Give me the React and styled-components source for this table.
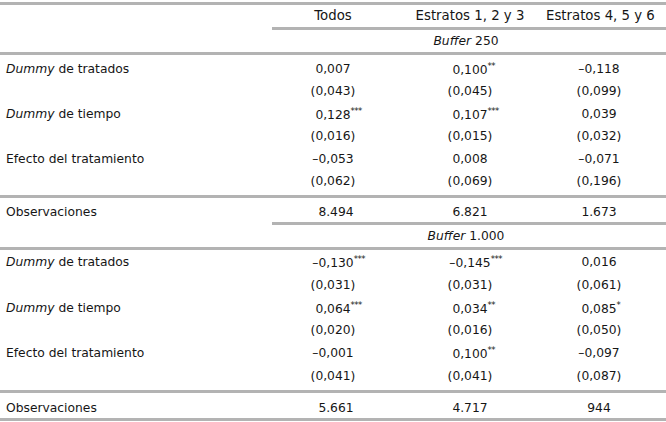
import React from 'react';
import styled, { createGlobalStyle } from 'styled-components';

const GlobalStyle = createGlobalStyle`
  html, body {
    margin: 0;
    padding: 0;
    background: #ffffff;
  }
  body {
    font-family: "DejaVu Sans", "Liberation Sans", sans-serif;
    font-size: 12.3px;
    color: #161616;
  }
`;

const secciones = [
  {
    titulo: '250',
    filas: [
      { label: 'tratados', dummy: true, valores: [['0,007'], ['0,100', '**'], ['–0,118']] },
      { valores: [['(0,043)'], ['(0,045)'], ['(0,099)']] },
      { label: 'tiempo', dummy: true, valores: [['0,128', '***'], ['0,107', '***'], ['0,039']] },
      { valores: [['(0,016)'], ['(0,015)'], ['(0,032)']] },
      { label: 'Efecto del tratamiento', valores: [['–0,053'], ['0,008'], ['–0,071']] },
      { valores: [['(0,062)'], ['(0,069)'], ['(0,196)']] }
    ],
    obs: ['8.494', '6.821', '1.673'],
    alto: 22.4,
    arriba: 3,
    abajo: 3,
    obsAlto: 24,
    obsPad: 3
  },
  {
    titulo: '1.000',
    filas: [
      { label: 'tratados', dummy: true, valores: [['–0,130', '***'], ['–0,145', '***'], ['0,016']] },
      { valores: [['(0,031)'], ['(0,031)'], ['(0,061)']] },
      { label: 'tiempo', dummy: true, valores: [['0,064', '***'], ['0,034', '**'], ['0,085', '*']] },
      { valores: [['(0,020)'], ['(0,016)'], ['(0,050)']] },
      { label: 'Efecto del tratamiento', valores: [['–0,001'], ['0,100', '**'], ['–0,097']] },
      { valores: [['(0,041)'], ['(0,041)'], ['(0,087)']] }
    ],
    obs: ['5.661', '4.717', '944'],
    alto: 22.8,
    arriba: 0.5,
    abajo: 2,
    obsAlto: 25,
    obsPad: 6
  }
];

function Valor({ v }) {
  return (
    <>
      {v[0]}
      {v[1] && <Stars>{v[1]}</Stars>}
    </>
  );
}

export default function App() {
  return (
    <Tabla>
      <GlobalStyle />
      <Rule />
      <Row $h={22} $head>
        <Label />
        <Cell>Todos</Cell>
        <Cell>Estratos 1, 2 y 3</Cell>
        <Cell $last>Estratos 4, 5 y 6</Cell>
      </Row>
      {secciones.map((s) => (
        <React.Fragment key={s.titulo}>
          <Rule $partial />
          <Row $h={22}>
            <Label />
            <Span>
              <em>Buffer</em> {s.titulo}
            </Span>
          </Row>
          <Rule />
          <Body $top={s.arriba} $bottom={s.abajo}>
            {s.filas.map((f, j) => (
              <Row key={j} $h={s.alto}>
                <Label>
                  {f.dummy ? (
                    <>
                      <em>Dummy</em> de {f.label}
                    </>
                  ) : (
                    f.label
                  )}
                </Label>
                <Cell><Valor v={f.valores[0]} /></Cell>
                <Cell><Valor v={f.valores[1]} /></Cell>
                <Cell $last><Valor v={f.valores[2]} /></Cell>
              </Row>
            ))}
          </Body>
          <Rule />
          <Row $h={s.obsAlto} $pad={s.obsPad}>
            <Label>Observaciones</Label>
            <Cell $shift={3}>{s.obs[0]}</Cell>
            <Cell>{s.obs[1]}</Cell>
            <Cell $last>{s.obs[2]}</Cell>
          </Row>
        </React.Fragment>
      ))}
      <Rule />
    </Tabla>
  );
}

const Tabla = styled.div`
  width: 666px;
  padding-top: 2px;
  display: flex;
  flex-direction: column;
`;

const Rule = styled.div`
  height: 3px;
  background: #b3b3b3;
  margin-left: ${({ $partial }) => ($partial ? '272px' : '0')};
`;

const Body = styled.div`
  padding-top: ${({ $top }) => $top}px;
  padding-bottom: ${({ $bottom }) => $bottom}px;
`;

const Row = styled.div`
  box-sizing: border-box;
  display: grid;
  grid-template-columns: 272px 122px 152px 120px;
  align-items: center;
  height: ${({ $h }) => $h}px;
  padding-top: ${({ $pad }) => $pad || 0}px;
  line-height: 1;
  font-size: ${({ $head }) => ($head ? '13.3px' : 'inherit')};
`;

const Label = styled.div`
  padding-left: 6px;
  white-space: nowrap;

  em {
    font-style: italic;
  }
`;

const Cell = styled.div`
  text-align: center;
  white-space: nowrap;
  padding-left: ${({ $shift }) => ($shift ? $shift * 2 : 0)}px;
  padding-right: ${({ $last }) => ($last ? 14 : 0)}px;
`;

const Span = styled.div`
  grid-column: 2 / 5;
  text-align: center;
  padding-right: 6px;
  white-space: nowrap;

  em {
    font-style: italic;
  }
`;

const Stars = styled.span`
  display: inline-block;
  width: 0;
  font-size: 8.5px;
  vertical-align: 5px;
  letter-spacing: -0.5px;
`;
